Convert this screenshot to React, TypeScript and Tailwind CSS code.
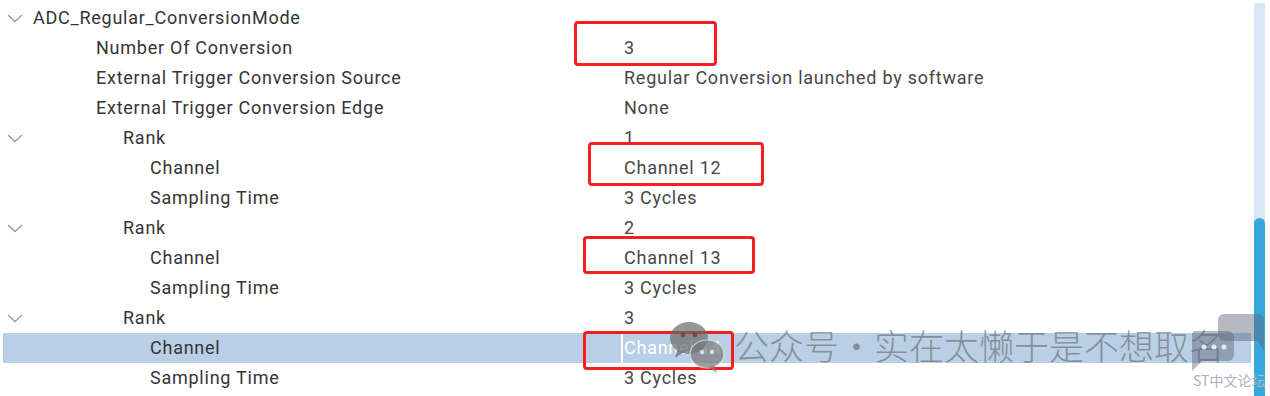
import React from "react";

type Row = { label: string; value: string; indent: number; chevron?: boolean; selected?: boolean };

const rows: Row[] = [
  { label: "ADC_Regular_ConversionMode", value: "", indent: 0, chevron: true },
  { label: "Number Of Conversion", value: "3", indent: 63 },
  { label: "External Trigger Conversion Source", value: "Regular Conversion launched by software", indent: 63 },
  { label: "External Trigger Conversion Edge", value: "None", indent: 63 },
  { label: "Rank", value: "1", indent: 90, chevron: true },
  { label: "Channel", value: "Channel 12", indent: 117 },
  { label: "Sampling Time", value: "3 Cycles", indent: 117 },
  { label: "Rank", value: "2", indent: 90, chevron: true },
  { label: "Channel", value: "Channel 13", indent: 117 },
  { label: "Sampling Time", value: "3 Cycles", indent: 117 },
  { label: "Rank", value: "3", indent: 90, chevron: true },
  { label: "Channel", value: "Channel 14", indent: 117, selected: true },
  { label: "Sampling Time", value: "3 Cycles", indent: 117 },
];

function Chevron() {
  return (
    <svg width="16" height="9" viewBox="0 0 16 9" className="ml-[4px]">
      <polyline points="1,1 8,7.5 15,1" fill="none" stroke="#9a9a9a" strokeWidth="1.3" />
    </svg>
  );
}

function WeChat({ className }: { className?: string }) {
  return (
    <svg width="58" height="54" viewBox="0 0 58 54" className={className}>
      <ellipse cx="20" cy="17" rx="19" ry="16" fill="rgba(105,105,105,0.7)" />
      <path d="M8 29 L6 37 L15 31 Z" fill="rgba(105,105,105,0.7)" />
      <circle cx="14" cy="14" r="2.4" fill="rgba(120,60,60,0.8)" />
      <circle cx="26" cy="14" r="2.4" fill="rgba(120,60,60,0.8)" />
      <ellipse cx="38" cy="33" rx="17" ry="14" fill="rgba(120,120,120,0.7)" stroke="rgba(235,235,235,0.8)" strokeWidth="1.2" />
      <path d="M45 44 L48 52 L39 46 Z" fill="rgba(120,120,120,0.7)" />
      <circle cx="33" cy="31" r="2.2" fill="rgba(235,235,235,0.85)" />
      <circle cx="43" cy="31" r="2.2" fill="rgba(235,235,235,0.85)" />
    </svg>
  );
}

export default function App() {
  return (
    <div
      className="relative w-[1270px] h-[396px] overflow-hidden bg-white"
      style={{ fontFamily: "Roboto, 'Noto Sans', 'Liberation Sans', sans-serif" }}
    >
      <div className="flex h-full pl-[3px]">
        <div className="w-[1248px] pt-[3px] flex flex-col">
          {rows.map((r, i) => (
            <div
              key={i}
              className={`flex items-center h-[30px] text-[18px] leading-[28px] tracking-[0.75px] ${r.selected ? "bg-[#b8cfe6]" : ""}`}
            >
              <div className="w-[30px] flex items-center">{r.chevron ? <Chevron /> : null}</div>
              <div className="w-[588px] pb-[1px] text-[#353535] whitespace-nowrap" style={{ paddingLeft: r.indent }}>
                {r.label}
              </div>
              <div
                className={`flex-1 h-full flex items-center pb-[1px] whitespace-nowrap ${
                  r.selected ? "border-l-2 border-white text-white pl-[1px]" : "text-[#474747] pl-[3px]"
                }`}
              >
                {r.value}
              </div>
            </div>
          ))}
        </div>
        <div className="ml-[3px] mt-[3px] w-[11px] bg-[#d7e7f6] flex flex-col justify-end">
          <div className="h-[178px] bg-[#38a7dc] rounded-t-[6px]" />
        </div>
      </div>

      {/* red annotation boxes */}
      <div className="absolute left-[574px] top-[21px] w-[143px] h-[45px] border-[3px] border-[#f51d1d] rounded-[4px]" />
      <div className="absolute left-[588px] top-[142px] w-[176px] h-[44px] border-[3px] border-[#f51d1d] rounded-[4px]" />
      <div className="absolute left-[583px] top-[236px] w-[172px] h-[38px] border-[3px] border-[#f51d1d] rounded-[4px]" />
      <div className="absolute left-[583px] top-[331px] w-[151px] h-[39px] border-[3px] border-[#f51d1d] rounded-[4px]" />

      {/* watermark */}
      <WeChat className="absolute left-[669px] top-[321px]" />
      <div
        className="absolute left-[734px] top-[324px] text-[35px] leading-[42px] text-[rgba(100,100,100,0.6)] whitespace-nowrap"
        style={{ fontFamily: "'Noto Sans CJK SC', sans-serif", fontWeight: 300 }}
      >
        公众号・实在太懒于是不想取名
      </div>
      <svg width="80" height="62" viewBox="0 0 80 62" className="absolute left-[1188px] top-[311px]">
        <path d="M36 3 H70 a6 6 0 0 1 6 6 V40 L70 30 H36 a6 6 0 0 1 -6 -6 V9 a6 6 0 0 1 6 -6 Z" fill="rgba(90,100,120,0.45)" />
        <path d="M6 20 H40 a6 6 0 0 1 6 6 V44 a6 6 0 0 1 -6 6 H14 L4 60 V26 a6 6 0 0 1 2 -6 Z" fill="rgba(90,100,120,0.45)" />
        <circle cx="16" cy="36" r="2.5" fill="rgba(240,240,240,0.9)" />
        <circle cx="26" cy="36" r="2.5" fill="rgba(240,240,240,0.9)" />
        <circle cx="36" cy="36" r="2.5" fill="rgba(240,240,240,0.9)" />
      </svg>
      <div
        className="absolute left-[1193px] top-[371px] text-[14px] leading-[18px] text-[#a9b3c2] whitespace-nowrap"
        style={{ fontFamily: "'Noto Sans CJK SC', sans-serif" }}
      >
        ST中文论坛
      </div>
    </div>
  );
}
